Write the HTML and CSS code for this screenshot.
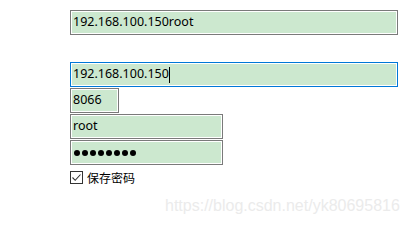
FILE: index.html
```html
<!DOCTYPE html>
<html>
<head>
<meta charset="utf-8">
<link rel="stylesheet" href="styles.css">
</head>
<body>
<div class="page">
  <div class="field wide">192.168.100.150root</div>
  <div class="stack">
    <div class="field wide focused">192.168.100.150<span class="caret"></span></div>
    <div class="field port">8066</div>
    <div class="field mid">root</div>
    <div class="field mid pw"><span class="dot"></span><span class="dot"></span><span class="dot"></span><span class="dot"></span><span class="dot"></span><span class="dot"></span><span class="dot"></span><span class="dot"></span></div>
    <label class="check-row">
      <span class="checkbox"><svg width="11" height="11" viewBox="0 0 11 11"><path d="M1.5 5.5 L4.2 8.3 L9.5 2.5" fill="none" stroke="#333" stroke-width="1.1"/></svg></span>
      <span class="check-label">保存密码</span>
    </label>
  </div>
</div>
<div class="watermark">https://blog.csdn.net/yk80695816</div>
</body>
</html>
```
FILE: styles.css
```css
html, body {
  margin: 0;
  padding: 0;
  background: #fff;
}
.page {
  padding: 10px 0 0 70px;
  font-family: "Noto Sans", "Noto Sans CJK SC", sans-serif;
  font-size: 12.5px;
  color: #000;
}
.field {
  box-sizing: border-box;
  height: 25px;
  border: 1px solid #7a7a7a;
  box-shadow: inset 0 0 0 1px #fff;
  background: #cce8cf;
  padding: 0 0 0 2px;
  display: flex;
  align-items: center;
  line-height: 1;
}
.wide { width: 328px; }
.port { width: 49px; }
.mid { width: 153px; }
.focused { border-color: #0078d7; }
.stack {
  margin-top: 27px;
  display: flex;
  flex-direction: column;
  align-items: flex-start;
  gap: 1px;
}
.caret {
  display: inline-block;
  width: 1px;
  height: 16px;
  background: #000;
  margin-left: 0;
}
.pw { gap: 2px; padding-left: 3px; }
.dot {
  width: 6px;
  height: 6px;
  border-radius: 50%;
  background: #000;
}
.check-row {
  margin-top: 3px;
  display: flex;
  align-items: center;
  gap: 4px;
}
.checkbox {
  box-sizing: border-box;
  width: 13px;
  height: 13px;
  border: 1px solid #333;
  background: #fff;
  display: flex;
  align-items: center;
  justify-content: center;
}
.checkbox svg { display: block; }
.check-label {
  font-family: "Noto Sans CJK SC", sans-serif;
  font-size: 12px;
}
.watermark {
  position: absolute;
  left: 165px;
  top: 197px;
  font-family: "Liberation Sans", Arial, sans-serif;
  font-size: 16px;
  color: #ebebeb;
}
```
